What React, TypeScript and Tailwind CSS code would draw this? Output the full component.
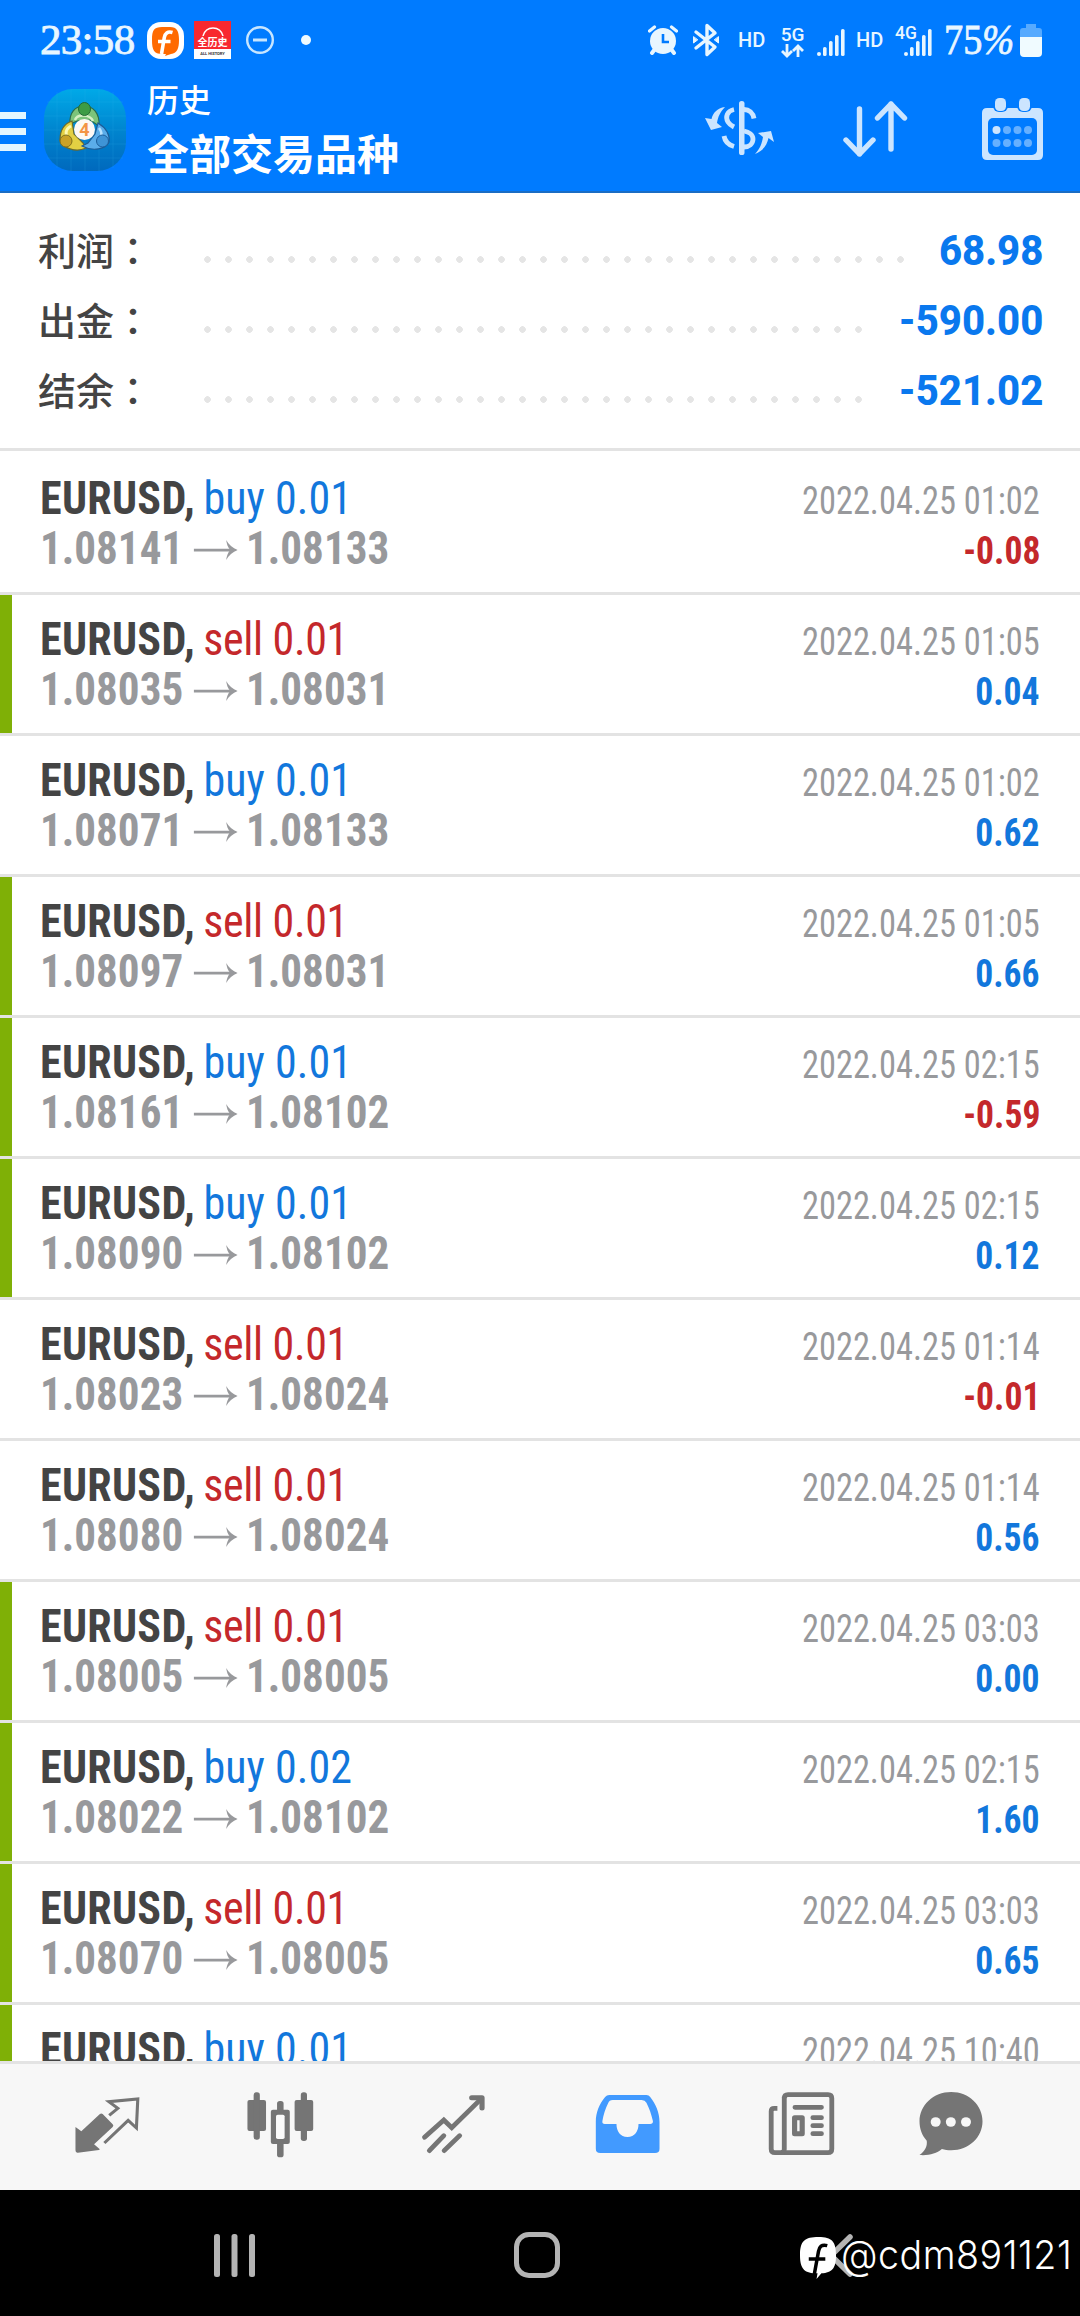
import React from 'react';

interface Trade {
  side: 'buy' | 'sell';
  volume: string;
  open: string;
  close: string;
  time: string;
  profit: string;
  marked: boolean;
}

const trades: Trade[] = [
  { side: 'buy', volume: '0.01', open: '1.08141', close: '1.08133', time: '2022.04.25 01:02', profit: '-0.08', marked: false },
  { side: 'sell', volume: '0.01', open: '1.08035', close: '1.08031', time: '2022.04.25 01:05', profit: '0.04', marked: true },
  { side: 'buy', volume: '0.01', open: '1.08071', close: '1.08133', time: '2022.04.25 01:02', profit: '0.62', marked: false },
  { side: 'sell', volume: '0.01', open: '1.08097', close: '1.08031', time: '2022.04.25 01:05', profit: '0.66', marked: true },
  { side: 'buy', volume: '0.01', open: '1.08161', close: '1.08102', time: '2022.04.25 02:15', profit: '-0.59', marked: true },
  { side: 'buy', volume: '0.01', open: '1.08090', close: '1.08102', time: '2022.04.25 02:15', profit: '0.12', marked: true },
  { side: 'sell', volume: '0.01', open: '1.08023', close: '1.08024', time: '2022.04.25 01:14', profit: '-0.01', marked: false },
  { side: 'sell', volume: '0.01', open: '1.08080', close: '1.08024', time: '2022.04.25 01:14', profit: '0.56', marked: false },
  { side: 'sell', volume: '0.01', open: '1.08005', close: '1.08005', time: '2022.04.25 03:03', profit: '0.00', marked: true },
  { side: 'buy', volume: '0.02', open: '1.08022', close: '1.08102', time: '2022.04.25 02:15', profit: '1.60', marked: true },
  { side: 'sell', volume: '0.01', open: '1.08070', close: '1.08005', time: '2022.04.25 03:03', profit: '0.65', marked: true },
  { side: 'buy', volume: '0.01', open: '', close: '', time: '2022.04.25 10:40', profit: '', marked: true },
];

const SignalBars: React.FC = () => (
  <svg width="28" height="27" viewBox="0 0 28 27" fill="#e8f6ff">
    <circle cx="2" cy="25" r="2" />
    <rect x="6" y="18" width="3.6" height="9" rx="1.6" />
    <rect x="12" y="12" width="3.6" height="15" rx="1.6" />
    <rect x="18" y="6" width="3.6" height="21" rx="1.6" />
    <rect x="24" y="0" width="3.6" height="27" rx="1.6" />
  </svg>
);

const StatusBar: React.FC = () => (
  <div className="h-[80px] flex items-center text-[#e8f6ff]">
    <div className="w-[107px] pl-10 font-['Liberation_Serif',serif] text-[43px] leading-[78px] tracking-[-0.7px] [-webkit-text-stroke:0.8px_#e8f6ff] whitespace-nowrap">23:58</div>
    <svg className="ml-[40px]" width="37" height="37" viewBox="0 0 37 37">
      <rect width="37" height="37" rx="14" fill="#fff" />
      <path d="M15 5h8c7 0 9 4 9 13s-2 13-8 14l-6 2 1-2h-4C7 32 5 28 5 18S7 5 15 5z" fill="#ff6a00" />
      <path d="M25.500 10.500c-5-1.500-7.500 1-8.200 5L14.500 32M11 19.500h12.500" stroke="#fff" strokeWidth="3.600" fill="none" />
    </svg>
    <div className="ml-[10px] w-[37px] h-[38px] bg-[#f8282f] flex flex-col items-center justify-end overflow-hidden">
      <svg width="22" height="9" viewBox="0 0 22 9" fill="none" stroke="#fff" strokeWidth="1.500">
        <path d="M1 9C3 2 7 1 11 1s8 1 10 8" />
      </svg>
      <span className="font-['Noto_Sans_CJK_SC',sans-serif] font-bold text-[10px] leading-[11px] text-white">全历史</span>
      <span className="mt-[2px] w-full bg-white text-center font-['Roboto',sans-serif] font-bold text-[4px] leading-[10px] text-[#333]">ALL HISTORY</span>
    </div>
    <svg className="ml-[15px]" width="28" height="28" viewBox="0 0 28 28" fill="none" stroke="#c8e6ff" strokeWidth="2.400">
      <circle cx="14" cy="14" r="12.800" />
      <path d="M7 14h14" strokeWidth="3" />
    </svg>
    <div className="ml-[27px] w-[10px] h-[10px] rounded-full bg-[#f0fbff]" />

    <svg className="ml-[337px]" width="30" height="30" viewBox="0 0 30 30">
      <path d="M7 24l-3 4M23 24l3 4" stroke="#e8f6ff" strokeWidth="4" strokeLinecap="round" />
      <path d="M1.500 6l5-4M28.500 6l-5-4" stroke="#e8f6ff" strokeWidth="3.200" strokeLinecap="round" />
      <circle cx="15" cy="16" r="13" fill="#e8f6ff" />
      <path d="M15 9v8h6" stroke="#007bff" strokeWidth="2.600" fill="none" />
    </svg>
    <svg className="ml-[14px]" width="28" height="34" viewBox="0 0 28 34" fill="none" stroke="#e8f6ff" strokeWidth="3.400" strokeLinecap="round" strokeLinejoin="round">
      <path d="M4 9l19 15-8 7.500V2.500L23 10 4 25" />
      <path d="M1.500 14v6l4-3zM26.500 14v6l-4-3z" fill="#e8f6ff" strokeWidth="1" />
    </svg>
    <div className="ml-[18px] w-[28px] font-['Roboto',sans-serif] font-medium text-[20px] leading-5">HD</div>
    <div className="ml-[14px] w-[25px] pt-[3px] flex flex-col items-center">
      <span className="font-['Roboto',sans-serif] font-medium text-[19px] leading-[18px]">5G</span>
      <svg width="23" height="14" viewBox="0 0 23 14" fill="none" stroke="#e8f6ff" strokeWidth="2.800">
        <path d="M6 0v12M1 7l5 5 5-5M17 13V2M12 7l5-5 5 5" />
      </svg>
    </div>
    <div className="ml-[12px] pt-[5px]"><SignalBars /></div>
    <div className="ml-[11px] w-[28px] font-['Roboto',sans-serif] font-medium text-[20px] leading-5">HD</div>
    <div className="ml-[11px] w-[37px] pt-[5px] relative flex justify-end">
      <span className="absolute left-0 top-0 font-['Roboto',sans-serif] font-medium text-[17.500px] leading-[18px]">4G</span>
      <SignalBars />
    </div>
    <div className="ml-[12px] w-[76px] font-['Liberation_Serif',serif] text-[43px] leading-[78px] [-webkit-text-stroke:0.8px_#e8f6ff] whitespace-nowrap">
      <span className="inline-block origin-left scale-x-[0.890]">75<span className="italic">%</span></span>
    </div>
    <svg width="22" height="33" viewBox="0 0 22 33">
      <path d="M6 0h10v4h3q3 0 3 3v6H0V7q0-3 3-3h3z" fill="#56aaff" />
      <path d="M0 13h22v16q0 4-4 4H4q-4 0-4-4z" fill="#f0fbff" />
    </svg>
  </div>
);

const AppLogo: React.FC = () => (
  <svg width="84" height="84" viewBox="0 0 84 84">
    <defs>
      <linearGradient id="logoBg" x1="0" y1="0" x2="0" y2="1">
        <stop offset="0" stopColor="#00a9e8" />
        <stop offset="0.500" stopColor="#0085cf" />
        <stop offset="1" stopColor="#0069bd" />
      </linearGradient>
    </defs>
    <rect x="1" y="1" width="82" height="82" rx="29" fill="url(#logoBg)" />
    <path d="M14 4v76M28 1v82M42 1v82M56 1v82M70 4v76M4 14h76M1 28h82M1 42h82M1 56h82M4 70h76" stroke="#35b5ee" strokeWidth="0.700" opacity="0.250" />
    <path d="M27 36C26 25 32 18 41 18s16 7 15 20l-9-6-13 1z" fill="#7cc47a" stroke="#2b6b4a" strokeWidth="1.200" />
    <path d="M32 32c2-6 15-6 18 1" fill="none" stroke="#d5f0c4" strokeWidth="2.500" />
    <path d="M29 33c-9 3-12 11-12 19 2 8 16 13 26 8l-3-5-9-9z" fill="#e3d043" stroke="#6c6a2c" strokeWidth="1.200" />
    <path d="M28 38c-6 3-6 9-3 13" fill="none" stroke="#fdf9b0" strokeWidth="3" />
    <path d="M55 35c8 5 12 12 11 19-3 7-16 10-27 4l6-3 7-9z" fill="#5badea" stroke="#1d5c96" strokeWidth="1.200" />
    <path d="M56 40c4 5 3 10-2 12" fill="none" stroke="#b9e2ff" strokeWidth="2.500" />
    <ellipse cx="41.500" cy="21" rx="6" ry="6.500" fill="#3d9c44" stroke="#236a35" />
    <circle cx="23" cy="53" r="6" fill="#c9a227" stroke="#80701c" />
    <circle cx="59.500" cy="53" r="6" fill="#3f94d6" stroke="#1c5e9c" />
    <circle cx="41.500" cy="41.500" r="10.500" fill="#fdf8f4" />
    <text x="41.500" y="48" textAnchor="middle" fontFamily="Roboto, sans-serif" fontWeight="700" fontSize="18" fill="#f39445">4</text>
  </svg>
);

const AppBar: React.FC = () => (
  <div className="h-[111px] flex text-white">
    <div className="w-[26px] pt-[32px] flex flex-col gap-[9px]">
      <div className="h-[7px] bg-[#e4f6ff]" />
      <div className="h-[7px] bg-[#e4f6ff]" />
      <div className="h-[7px] bg-[#e4f6ff]" />
    </div>
    <div className="ml-[17px] pt-[8px]"><AppLogo /></div>
    <div className="ml-[20px] w-[400px] font-['Noto_Sans_CJK_SC',sans-serif]">
      <div className="text-[32px] leading-[37px] font-medium">历史</div>
      <div className="text-[42px] leading-[70px] font-bold">全部交易品种</div>
    </div>
    <svg className="ml-[158px] mt-[20px]" width="70" height="56" viewBox="0 0 70 56" fill="#cce5ff">
      <path d="M20 7C12 8 8 13 6.500 19L0 18l6 12 11-3-5-4c1-6 3-11 8-16z" />
      <path d="M50 54c8-3 12-9 13.500-16L69 42 66 31l-13 2 5 4c-1 6-3 12-8 17z" />
      <rect x="34" y="1" width="5.500" height="54" rx="2.600" />
      <g fill="none" stroke="#cce5ff" strokeWidth="4.800">
        <path d="M29 9.500C22 11 20 17 23 22c1.500 2.500 4 4 6 5" />
        <path d="M19 36c1 6 5 9 10 10.500" />
        <path d="M39 9.500c5 0 9 3 10 9M39 31c5 1 9 4 9 8 0 5-4 8-9 8" />
      </g>
    </svg>
    <svg className="ml-[68px] mt-[21px]" width="66" height="56" viewBox="0 0 66 56" fill="none" stroke="#cce5ff" strokeWidth="5.400" strokeLinecap="round" strokeLinejoin="round">
      <path d="M16.500 8v45M3 39l13.500 14L30 39" />
      <path d="M48 48V3M34.500 17L48 3l13.500 14" />
    </svg>
    <svg className="ml-[73px] mt-[17px]" width="61" height="64" viewBox="0 0 61 64">
      <path d="M5 11h51q5 0 5 5v42q0 5-5 5H5q-5 0-5-5V16q0-5 5-5z" fill="#cce5ff" />
      <rect x="6" y="21" width="49" height="37" rx="5" fill="#007bff" />
      <rect x="11" y="-1" width="15" height="16" rx="6" fill="#007bff" />
      <rect x="35" y="-1" width="15" height="16" rx="6" fill="#007bff" />
      <rect x="13" y="1" width="11" height="13" rx="4.500" fill="#cce5ff" />
      <rect x="37" y="1" width="11" height="13" rx="4.500" fill="#cce5ff" />
      <g fill="#66b0ff">
        <circle cx="14.500" cy="33" r="4" fill="#cce5ff" />
        <circle cx="25" cy="33" r="4" />
        <circle cx="35.500" cy="33" r="4" />
        <circle cx="46" cy="33" r="4" />
        <circle cx="14.500" cy="46" r="4" />
        <circle cx="25" cy="46" r="4" />
        <circle cx="35.500" cy="46" r="4" />
        <circle cx="46" cy="46" r="4" />
      </g>
    </svg>
  </div>
);

const SummaryRow: React.FC<{ label: string; value: string; dots: string }> = ({ label, value, dots }) => (
  <div className="h-[70px] flex items-center">
    <div className="w-[159px] font-['Noto_Sans_CJK_SC',sans-serif] text-[38px] leading-[68px] font-medium text-[#444] pb-[3px]">
      {label}<span className="font-['Noto_Sans_CJK_TC',sans-serif]">：</span>
    </div>
    <div className={`${dots} h-[7px] mt-[19px] bg-[radial-gradient(circle,#e5e5e5_3px,transparent_3.6px)] bg-[length:21px_7px]`} />
    <div className="ml-auto pt-[2px] origin-right scale-x-[0.955] font-['Roboto',sans-serif] font-extrabold text-[42px] leading-[70px] text-[#0a78ee]">{value}</div>
  </div>
);

const TradeRow: React.FC<{ trade: Trade }> = ({ trade }) => (
  <div className="h-[141px] shrink-0 flex border-b-[3px] border-[#e3e3e3] font-['Roboto_Condensed','Roboto',sans-serif] [font-stretch:75%] whitespace-nowrap">
    <div className={trade.marked ? 'w-[12px] bg-[#7fb006]' : 'w-[12px]'} />
    <div className="flex-1 pl-[28px] pr-[40px] pt-[19px]">
      <div className="flex items-baseline justify-between h-[50px]">
        <div className="text-[46px] leading-[50px] origin-left scale-x-[0.957]">
          <span className="font-bold text-[#444] tracking-[0.3px]">EURUSD,</span>
          <span className={trade.side === 'buy' ? 'ml-[9px] text-[#1277dc]' : 'ml-[8.500px] tracking-[-0.350px] text-[#c4282b]'}>{trade.side} {trade.volume}</span>
        </div>
        <div className="text-[38px] leading-[50px] origin-right scale-x-[0.905] text-[#98999c]">{trade.time}</div>
      </div>
      {trade.open && (
        <div className="flex items-baseline justify-between h-[50px]">
          <div className="text-[46px] leading-[50px] origin-left scale-x-[0.937] font-bold text-[#98999c] flex items-center">
            <span>{trade.open}</span>
            <svg className="ml-[11px] mr-[9px] mt-[4px]" width="47" height="20" viewBox="0 0 44 20" preserveAspectRatio="none" fill="#98999c">
              <path d="M0 8.700h37v2.700H0z" />
              <path d="M32.500 0C35 4.500 39 8 44 10c-5 2-9 5.500-11.500 10 .5-4 1.500-7 4-10-2.500-3-3.500-6-4-10z" />
            </svg>
            <span>{trade.close}</span>
          </div>
          <div className={`text-[38.500px] leading-[50px] origin-right scale-x-[0.925] font-bold ${trade.profit.startsWith('-') ? 'text-[#c4282b]' : 'text-[#1277dc]'}`}>{trade.profit}</div>
        </div>
      )}
    </div>
  </div>
);

// tab drawings share a 210-unit canvas
const TabBar: React.FC = () => (
  <div className="h-[129px] shrink-0 flex items-start pt-[26px] pl-[20px] bg-[#f7f7f7] border-t-[3px] border-[#e3e3e3]">
    <div className="w-[173.500px] flex justify-center">
      <svg width="72.300" height="70" viewBox="207 330 210 210" preserveAspectRatio="none" fill="#757575">
        <path d="M220 441l17 13 54-52q4-3 8 0l29 31q4 4 0 8l-54 52 16 14q1 3-2 3l-61 8q-7 1-7-7z" />
        <path d="M318 406l25-21-26-20 84-8-4 87-24-23-69 68" fill="none" stroke="#757575" strokeWidth="9" />
      </svg>
    </div>
    <div className="w-[173.500px] flex justify-center">
      <svg width="72.300" height="70" viewBox="708 330 210 210" preserveAspectRatio="none" fill="#757575">
        <rect x="718" y="360" width="54" height="93" rx="6" />
        <rect x="736" y="337" width="18" height="142" rx="8" />
        <rect x="855" y="360" width="54" height="93" rx="6" />
        <rect x="873" y="337" width="18" height="146" rx="8" />
        <rect x="804" y="363" width="19" height="40" rx="8" />
        <rect x="804" y="480" width="19" height="52" rx="8" />
        <rect x="786" y="389" width="55" height="103" rx="6" />
        <rect x="801" y="404" width="25" height="73" rx="5" fill="#fafafa" />
      </svg>
    </div>
    <div className="w-[173.500px] flex justify-center">
      <svg width="72.300" height="70" viewBox="1213 330 210 210" preserveAspectRatio="none" fill="none" stroke="#757575" strokeWidth="14" strokeLinecap="round" strokeLinejoin="round">
        <path d="M1232 472l56-52 23 23 86-87" strokeLinejoin="miter" />
        <path d="M1369 353h30v31" strokeWidth="15" />
        <path d="M1246 512l42-45M1289 512l45-45" />
      </svg>
    </div>
    <div className="w-[173.500px] flex justify-center">
      <svg width="72.300" height="70" viewBox="147 330 210 210" preserveAspectRatio="none">
        <path d="M200 345h108q7 0 11 6c16 22 27 45 27 75v80q0 13-13 13H174q-13 0-13-13v-80c0-30 10-53 27-75q5-6 12-6z" fill="#429aff" />
        <path d="M210 360h84q10 0 14 8c9 18 14 34 19 56q0 8-8 8h-34c0 22-11 39-32 39s-32-17-32-39h-34q-8 0-7-8c3-20 9-38 17-55q3-9 13-9z" fill="#f7f7f7" />
      </svg>
    </div>
    <div className="w-[173.500px] flex justify-center">
      <svg width="72.300" height="70" viewBox="654 330 210 210" preserveAspectRatio="none" fill="none" stroke="#757575" strokeWidth="14">
        <path d="M710 355q0-11 11-11h116q11 0 11 11v152q0 11-11 11H683q-11 0-11-11V394q0-9 9-9h9" />
        <path d="M710 350v158q0 9-9 10" />
        <path d="M741 382h77M793 413h25M793 437h25M793 461h25" strokeLinecap="round" />
        <rect x="740" y="413" width="22" height="48" strokeWidth="15" strokeLinejoin="round" />
      </svg>
    </div>
    <div className="w-[125px] flex justify-center">
      <svg width="72.300" height="70" viewBox="1086 330 210 210" preserveAspectRatio="none" fill="#757575">
        <path d="M1194 336c52 0 91 40 91 88s-39 87-91 87c-10 0-19-2-27-4-16 14-38 20-65 18 17-13 23-27 21-43-14-16-21-35-21-58 0-48 40-88 92-88z" />
        <g fill="#f7f7f7">
          <circle cx="1149" cy="426" r="14.500" />
          <circle cx="1193" cy="426" r="14.500" />
          <circle cx="1237" cy="426" r="14.500" />
        </g>
      </svg>
    </div>
  </div>
);

const NavBar: React.FC = () => (
  <div className="relative h-[126px] shrink-0 bg-black flex items-start">
    <svg className="ml-[214px] mt-[44px]" width="41" height="43" viewBox="0 0 41 43" fill="#b4b4b4">
      <rect x="0" y="0" width="6" height="43" rx="2.500" />
      <rect x="17.500" y="0" width="6" height="43" rx="2.500" />
      <rect x="35" y="0" width="6" height="43" rx="2.500" />
    </svg>
    <div className="ml-[259px] mt-[42px] w-[46px] h-[46px] rounded-[15px] border-[5.500px] border-[#b4b4b4]" />
    <svg className="ml-[267px] mt-[44px]" width="26" height="43" viewBox="0 0 26 43" fill="none" stroke="#b4b4b4" strokeWidth="5.500" strokeLinecap="round">
      <path d="M23 3L4 21.500 23 40" />
    </svg>
    <div className="absolute left-[800px] top-[45px] flex items-start text-white">
      <svg className="mt-[2px]" width="37" height="43" viewBox="0 0 38 45" preserveAspectRatio="none">
        <path d="M19 0c14 0 18 5 18 19s-4 18-15 19l-5 6 1-6C5 38 0 34 0 19S5 0 19 0z" fill="#fff" />
        <path d="M28 9c-6-1.500-8 1-9 6L14.500 40M9 23h17" stroke="#000" strokeWidth="3.600" fill="none" />
      </svg>
      <span className="ml-[4px] origin-left scale-x-[0.940] tracking-[0.550px] font-['Inter',sans-serif] font-light text-[40px] leading-[40px] whitespace-nowrap">@cdm891121</span>
    </div>
  </div>
);

const App: React.FC = () => {
  return (
    <div className="w-[1080px] h-[2316px] flex flex-col bg-white overflow-hidden">
      <div className="h-[193px] shrink-0 bg-[#007bff] border-b-2 border-[#1a6dc4]">
        <StatusBar />
        <AppBar />
      </div>
      <div className="h-[258px] shrink-0 pt-[22px] pl-[38px] pr-[37px] border-b-[3px] border-[#e3e3e3]">
        <SummaryRow label="利润" value="68.98" dots="w-[714px]" />
        <SummaryRow label="出金" value="-590.00" dots="w-[672px]" />
        <SummaryRow label="结余" value="-521.02" dots="w-[672px]" />
      </div>
      <div className="h-[1610px] shrink-0 pt-[3px] flex flex-col overflow-hidden">
        {trades.map((trade, i) => (
          <TradeRow key={i} trade={trade} />
        ))}
      </div>
      <TabBar />
      <NavBar />
    </div>
  );
};

export default App;
